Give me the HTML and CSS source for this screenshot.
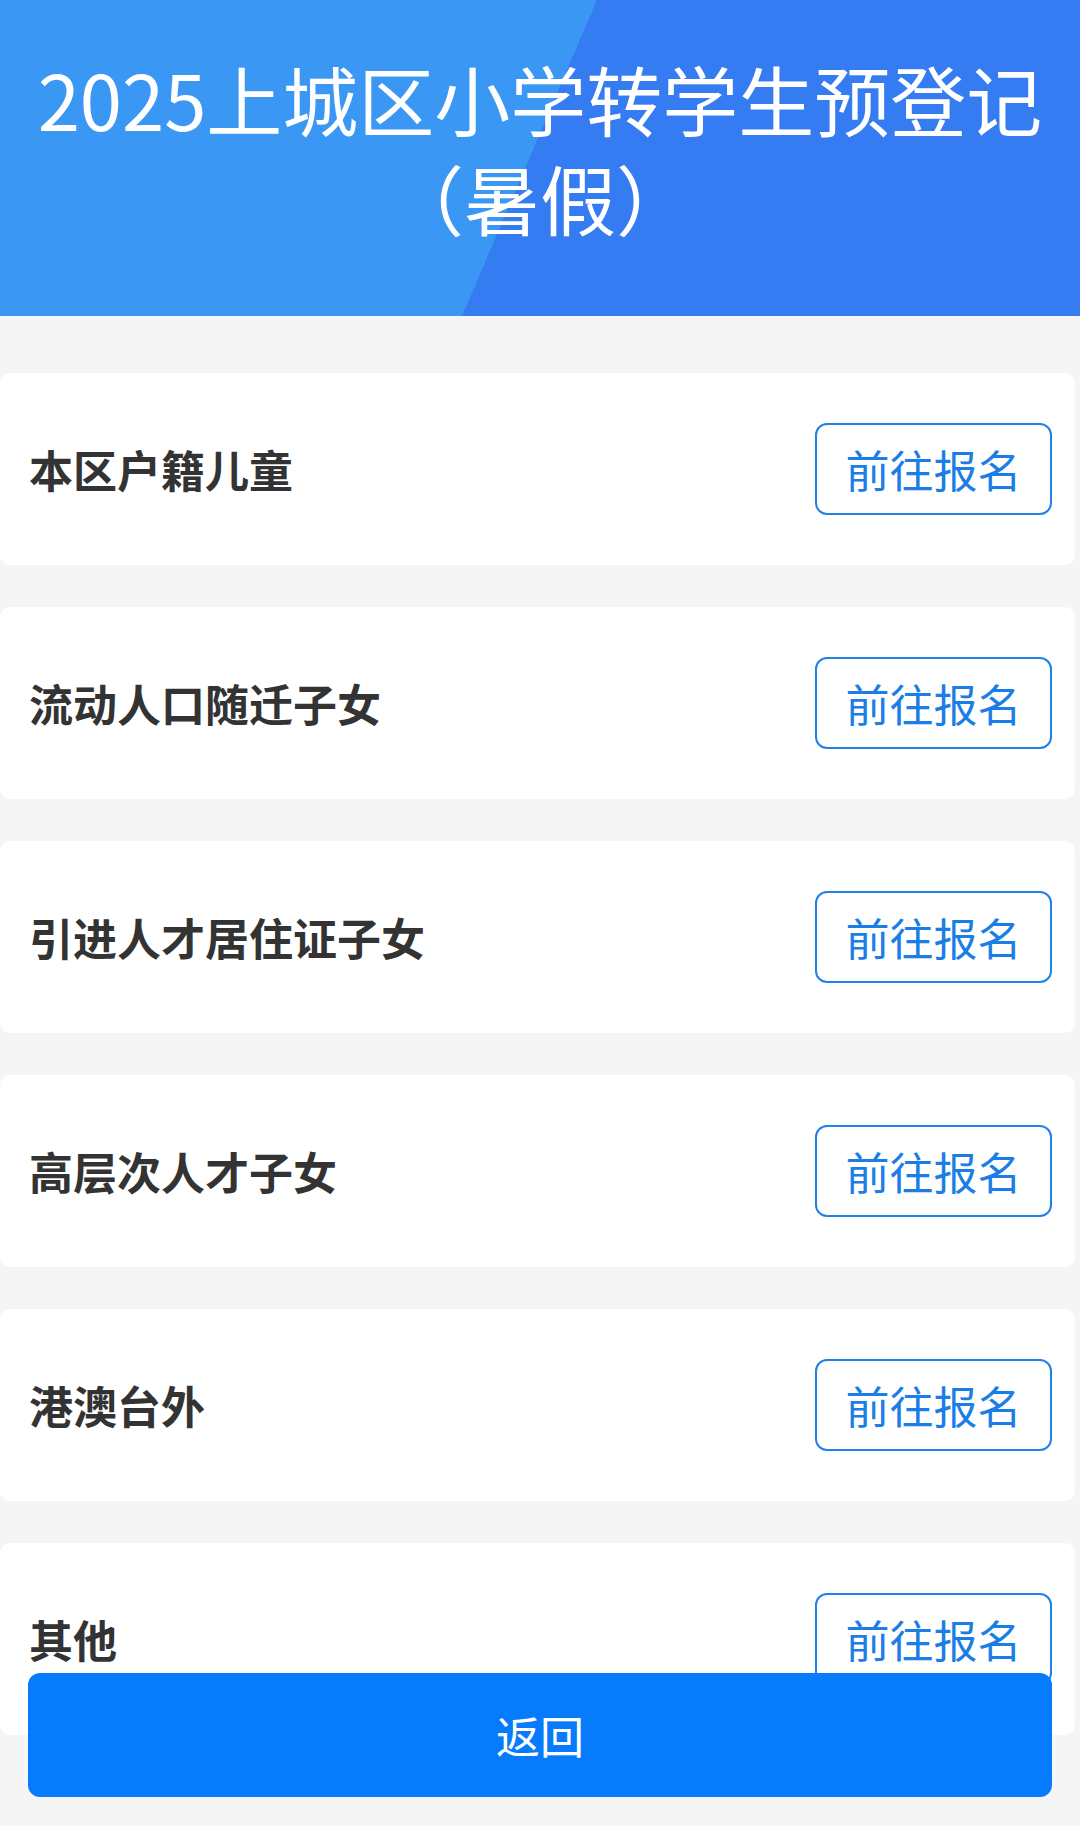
FILE: index.html
```html
<!DOCTYPE html>
<html lang="zh-CN">
<head>
<meta charset="utf-8">
<title>2025上城区小学转学生预登记（暑假）</title>
<link rel="stylesheet" href="styles.css">
</head>
<body>
<header class="banner">
  <h1 class="banner-title">2025上城区小学转学生预登记（暑假）</h1>
</header>
<main class="list">
  <section class="card"><span class="card-label">本区户籍儿童</span><a class="card-btn">前往报名</a></section>
  <section class="card"><span class="card-label">流动人口随迁子女</span><a class="card-btn">前往报名</a></section>
  <section class="card"><span class="card-label">引进人才居住证子女</span><a class="card-btn">前往报名</a></section>
  <section class="card"><span class="card-label">高层次人才子女</span><a class="card-btn">前往报名</a></section>
  <section class="card"><span class="card-label">港澳台外</span><a class="card-btn">前往报名</a></section>
  <section class="card"><span class="card-label">其他</span><a class="card-btn">前往报名</a></section>
</main>
<a class="back-btn">返回</a>
</body>
</html>
```
FILE: styles.css
```css
html, body {
  margin: 0;
  padding: 0;
}
body {
  background: #f5f5f5;
  font-family: "Noto Sans CJK SC", "Noto Sans", sans-serif;
  overflow: hidden;
}
.banner {
  height: 316px;
  box-sizing: border-box;
  padding: 49px 20px 0;
  background: linear-gradient(113.1deg, #3a97f4 549px, #357bf2 549px);
}
.banner-title {
  margin: 0;
  color: #ffffff;
  font-size: 76px;
  font-weight: 400;
  line-height: 99px;
  text-align: center;
}
.list {
  display: flex;
  flex-direction: column;
  gap: 42px;
  padding: 57px 5px 60px 0;
}
.card {
  height: 192px;
  box-sizing: border-box;
  background: #ffffff;
  border-radius: 10px;
  display: flex;
  align-items: center;
  justify-content: space-between;
  padding: 0 23px 0 29px;
}
.card-label {
  font-size: 44px;
  font-weight: 700;
  color: #333333;
}
.card-btn {
  width: 237px;
  height: 92px;
  box-sizing: border-box;
  border: 2px solid #2181e8;
  border-radius: 12px;
  color: #1b7de6;
  font-size: 44px;
  display: flex;
  align-items: center;
  justify-content: center;
}
.back-btn {
  position: fixed;
  left: 28px;
  right: 28px;
  bottom: 29px;
  height: 124px;
  border-radius: 12px;
  background: #067bfc;
  color: #ffffff;
  font-size: 44px;
  display: flex;
  align-items: center;
  justify-content: center;
}
```
